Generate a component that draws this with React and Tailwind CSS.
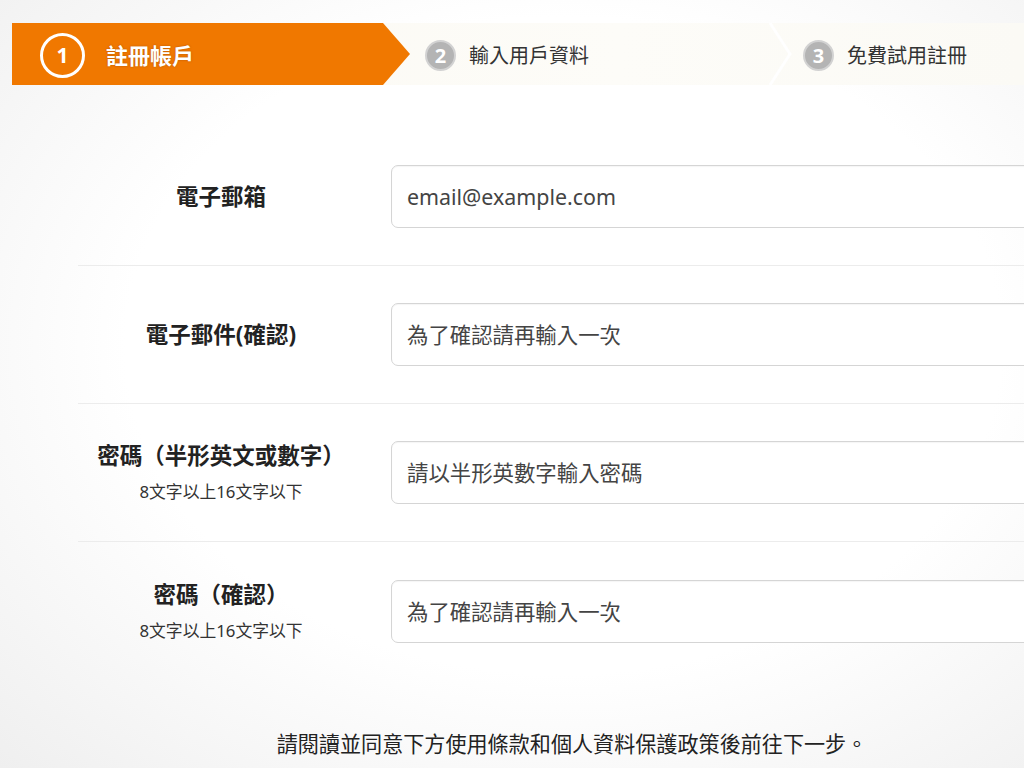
import React from "react";

const rows = [
  { label: "電子郵箱", placeholder: "email@example.com", type: "email" },
  { label: "電子郵件(確認)", placeholder: "為了確認請再輸入一次", type: "email" },
  { label: "密碼（半形英文或數字）", note: "8文字以上16文字以下", placeholder: "請以半形英數字輸入密碼", type: "password" },
  { label: "密碼（確認）", note: "8文字以上16文字以下", placeholder: "為了確認請再輸入一次", type: "password" },
];

function StepCircle({ n }) {
  return (
    <div className="w-[31px] h-[31px] rounded-full bg-[#b4b4b4] border-2 border-[#d2d2d2] flex items-center justify-center text-white text-[20px] font-bold leading-none">
      {n}
    </div>
  );
}

export default function App() {
  return (
    <div className="w-[1024px] h-[768px] overflow-hidden bg-[radial-gradient(ellipse_at_55%_45%,#ffffff_55%,#efefef_100%)] font-['Noto_Sans','Noto_Sans_CJK_TC',sans-serif] text-[#222]">
      {/* steps */}
      <div className="pt-[23px] pl-[12px]">
        <div className="flex h-[62px] bg-[linear-gradient(90deg,#fbf9f2,#fdfcf8_60%,#fbfaf5)]">
          <div className="w-[398px] h-[62px] bg-[#f07800] [clip-path:polygon(0_0,371px_0,100%_50%,371px_100%,0_100%)] flex items-center pl-[28px] pt-[2px]">
            <div className="w-[45px] h-[45px] rounded-full border-[3px] border-white flex items-center justify-center text-white text-[21px] font-bold leading-none">
              1
            </div>
            <span className="ml-[21px] text-white text-[22px] font-bold [text-shadow:0_0_2px_rgba(120,50,0,0.5)]">
              註冊帳戶
            </span>
          </div>
          <div className="w-[358px] flex items-center pl-[15px] pt-[3px]">
            <StepCircle n="2" />
            <span className="ml-[13px] text-[20px] text-[#333]">輸入用戶資料</span>
          </div>
          <svg width="24" height="62" viewBox="0 0 24 62" className="shrink-0">
            <polyline points="2,0 22,31 2,62" fill="none" stroke="#ffffff" strokeWidth="3" />
          </svg>
          <div className="flex items-center pl-[11px] pt-[3px]">
            <StepCircle n="3" />
            <span className="ml-[13px] text-[20px] text-[#333]">免費試用註冊</span>
          </div>
        </div>
      </div>

      {/* form */}
      <div className="ml-[78px] w-[988px] mt-[43px]">
        {rows.map((r, i) => (
          <div
            key={i}
            className={`flex items-center h-[138px] ${i < rows.length - 1 ? "border-b border-[#ececec]" : ""}`}
          >
            <div className="w-[286px] shrink-0 text-center">
              <div className="text-[22.5px] font-bold leading-[34px] text-[#222]">{r.label}</div>
              {r.note && <div className="text-[16.8px] leading-[28px] text-[#333] mt-[5px]">{r.note}</div>}
            </div>
            <input
              type={r.type}
              placeholder={r.placeholder}
              className="ml-[27px] flex-1 h-[63px] rounded-[7px] border border-[#d5d5d5] bg-white pl-[15px] text-[21.4px] text-[#333] placeholder:text-[#444] outline-none shadow-[inset_0_1px_1px_rgba(0,0,0,0.04)]"
            />
          </div>
        ))}
        <p className="mt-[48px] text-center text-[21.1px] leading-[32px] text-[#222]">
          請閱讀並同意下方使用條款和個人資料保護政策後前往下一步。
        </p>
      </div>
    </div>
  );
}
